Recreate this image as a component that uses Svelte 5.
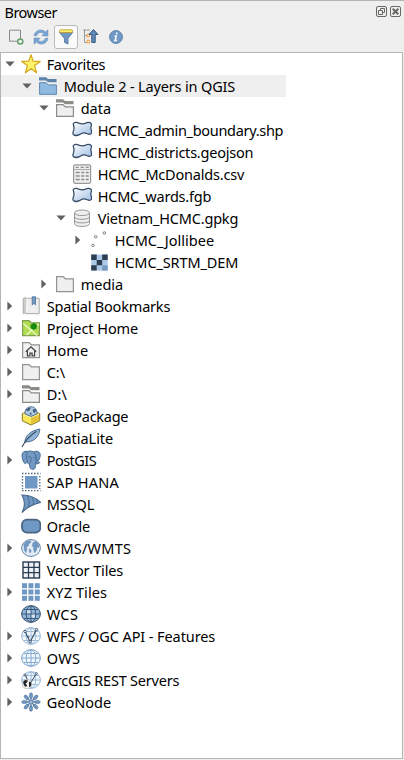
<script>
  const rows = [
    { label: 'Favorites', icon: 'star', level: 0, arrow: 'open', width: 58 },
    { label: 'Module 2 - Layers in QGIS', icon: 'blueFolder', level: 1, arrow: 'open', width: 171, selected: true },
    { label: 'data', icon: 'openFolder', level: 2, arrow: 'open', width: 30 },
    { label: 'HCMC_admin_boundary.shp', icon: 'polygon', level: 3, width: 185 },
    { label: 'HCMC_districts.geojson', icon: 'polygon', level: 3, width: 155 },
    { label: 'HCMC_McDonalds.csv', icon: 'table', level: 3, width: 146 },
    { label: 'HCMC_wards.fgb', icon: 'polygon', level: 3, width: 113 },
    { label: 'Vietnam_HCMC.gpkg', icon: 'database', level: 3, arrow: 'open', width: 140 },
    { label: 'HCMC_Jollibee', icon: 'points', level: 4, arrow: 'closed', width: 99 },
    { label: 'HCMC_SRTM_DEM', icon: 'raster', level: 4, width: 123 },
    { label: 'media', icon: 'folder', level: 2, arrow: 'closed', width: 42 },
    { label: 'Spatial Bookmarks', icon: 'bookmark', level: 0, arrow: 'closed', width: 123 },
    { label: 'Project Home', icon: 'project', level: 0, arrow: 'closed', width: 91 },
    { label: 'Home', icon: 'home', level: 0, arrow: 'closed', width: 41 },
    { label: 'C:\\', icon: 'folder', level: 0, arrow: 'closed', width: 18 },
    { label: 'D:\\', icon: 'openFolder', level: 0, arrow: 'closed', width: 20 },
    { label: 'GeoPackage', icon: 'package', level: 0, width: 81 },
    { label: 'SpatiaLite', icon: 'feather', level: 0, width: 66 },
    { label: 'PostGIS', icon: 'elephant', level: 0, arrow: 'closed', width: 49 },
    { label: 'SAP HANA', icon: 'hana', level: 0, width: 72 },
    { label: 'MSSQL', icon: 'mssql', level: 0, width: 47 },
    { label: 'Oracle', icon: 'oracle', level: 0, width: 43 },
    { label: 'WMS/WMTS', icon: 'wms', level: 0, arrow: 'closed', width: 84 },
    { label: 'Vector Tiles', icon: 'vectorTiles', level: 0, width: 76 },
    { label: 'XYZ Tiles', icon: 'xyz', level: 0, arrow: 'closed', width: 60 },
    { label: 'WCS', icon: 'wcs', level: 0, width: 31 },
    { label: 'WFS / OGC API - Features', icon: 'wfs', level: 0, arrow: 'closed', width: 168 },
    { label: 'OWS', icon: 'ows', level: 0, arrow: 'closed', width: 33 },
    { label: 'ArcGIS REST Servers', icon: 'arcgis', level: 0, arrow: 'closed', width: 132 },
    { label: 'GeoNode', icon: 'geonode', level: 0, arrow: 'closed', width: 64 }
  ];

  // Adjusts letter spacing so that a label fills its given width.
  function fit(node, width) {
    const natural = node.getBoundingClientRect().width;
    node.style.letterSpacing = `${(width + 0.5 - natural) / node.textContent.length}px`;
  }
  const cells = [0, 1, 2];
  const petals = [0, 45, 90, 135, 180, 225, 270, 315];
</script>

{#snippet globe(fill, line)}
  <ellipse cx="10" cy="10" rx="9.4" ry="8.3" fill={fill} stroke={line} />
  <path d="M10 2v16M1 10h18M3 5.5h14M3 14.5h14" fill="none" stroke={line} stroke-width=".9" />
  <ellipse cx="10" cy="10" rx="4.8" ry="8.2" fill="none" stroke={line} stroke-width=".9" />
{/snippet}

{#snippet icon(name)}
  <svg class="icon" viewBox="0 0 20 20" width="20" height="20">
    {#if name === 'star'}
      <path d="M10 .8l2.2 6.4 7 .2-5.6 4.2 2 7.2L10 14.7l-5.6 4.1 2-7.2L.8 7.4l7-.2z" fill="#fcf36b" stroke="#d5a51d" stroke-width="1.2" stroke-linejoin="round" />
    {:else if name === 'blueFolder'}
      <path d="M1 1.2h7l2 1.8h8.5v3.2H10L8 4.6H1z" fill="#5b83ac" />
      <path d="M1.6 6.7h6.5l2.3 2.2h8v9.4H1.6z" fill="#8fbbe2" stroke="#5b83ac" />
    {:else if name === 'openFolder'}
      <path d="M1 1.2h7l2 1.8h8.5v3.2H10L8 4.6H1z" fill="#8b8b87" />
      <path d="M1.6 6.7h6.5l2.3 2.2h8v9.4H1.6z" fill="#efefef" stroke="#8b8b87" stroke-width="1.2" />
    {:else if name === 'folder'}
      <path d="M1.6 2.6h6.5l2.3 2.2h8v12.9H1.6z" fill="#efefef" stroke="#939390" stroke-width="1.2" />
    {:else if name === 'polygon'}
      <defs><linearGradient id="area" x2="1" y2="1"><stop offset="0" stop-color="#fff" /><stop offset="1" stop-color="#9cbde3" /></linearGradient></defs>
      <path d="M1.2 4Q2.2 1.9 4.6 2.4c3.4 1.7 6.3 2.2 10 .3 2.6-.7 4.5-.2 4.8 1.3.3 1.6-.8 2.6-.5 4.3.3 2.1 1.2 3.6.4 5.1-.9 1.2-2.8 1-4.6.1-3.1-1.6-4.7-.4-6.8.9-2.6 1.3-5.1 1.4-6.5.1-.8-.9-.6-2.2.1-3.8 1-2.5.3-5-.3-6.7z" fill="url(#area)" stroke="#354b65" stroke-width="1.25" />
    {:else if name === 'table'}
      <rect x="1.6" y=".8" width="17" height="18.5" rx="1.5" fill="#eee" stroke="#999" stroke-width="1.2" />
      <path d="M2 5.5h16" stroke="#aaa" />
      <path d="M3.7 3.3h3M8.7 3.3h3M13.7 3.3h3M3.7 8.5h4M3.7 12h4M3.7 15.5h4M9.2 8.5h3M9.2 12h3M9.2 15.5h3M13.7 8.5h3M13.7 12h3M13.7 15.5h3" stroke="#8d8d8d" stroke-width="1.3" />
    {:else if name === 'database'}
      <path d="M2.5 5v10.5c0 4 15 4 15 0V5" fill="#efefef" stroke="#999" />
      <ellipse cx="10" cy="4.8" rx="7.5" ry="2.8" fill="#efefef" stroke="#999" />
      <path d="M2.5 8.7c0 3.5 15 3.5 15 0M2.5 12.3c0 3.5 15 3.5 15 0" fill="none" stroke="#999" />
    {:else if name === 'points'}
      <g fill="#eee" stroke="#8a8a86"><circle cx="4" cy="15.4" r="1.3" /><circle cx="6.7" cy="6.8" r="1.3" /><circle cx="15.4" cy="3" r="1.3" /></g>
    {:else if name === 'raster'}
      <g transform="translate(1.2 .6)">
        <path d="M1 2h16.5v16H1z" fill="#adc9e8" />
        <path d="M1 2h5.5v5.3H1zM12 2h5.5v5.3H12zM6.5 7.3H12v5.4H6.5zM1 12.7h5.5V18H1z" fill="#2c3e52" />
        <path d="M12 12.7h5.5V18H12z" fill="#7699c3" />
      </g>
    {:else if name === 'bookmark'}
      <path d="M2.2 2.5q2-1.6 4 0v15q-2-1.3-4 0z" fill="#ccc" stroke="#aaa" />
      <path d="M6.4 2.3h11.8v15.4H4.8" fill="#eee" stroke="#aaa" />
      <path d="M5.8 2.5v13.2" stroke="#fff" />
      <path d="M11.2.8h3.3v8l-1.6-1.4-1.7 1.4z" fill="#739bc6" stroke="#4d7097" stroke-width=".8" />
    {:else if name === 'project'}
      <path d="M1.6 2.6h6.5l2.3 2.2h8v12.9H1.6z" fill="#b0dc52" stroke="#829e55" stroke-width="1.2" />
      <path d="M2.2 5.5l14 12M5.5 17L17.8 6" stroke="#effbc8" stroke-width="1.2" />
      <path d="M9.5 7l3.5-2.2 3.2 2.4-.8 3.6-3.2 1.2-2.5-2z" fill="#168b10" />
    {:else if name === 'home'}
      <path d="M1.6 2.6h6.5l2.3 2.2h8v12.9H1.6z" fill="#efefef" stroke="#939390" stroke-width="1.2" />
      <path d="M4.8 11.8L10 6.8l5.2 5M6.4 11v4.8h2.5v-2.6h2.2v2.6h2.5V11" fill="none" stroke="#444" stroke-width="1.2" />
    {:else if name === 'package'}
      <path d="M1.3 7.5L10 5l8.7 2.5v7.3L10 19l-8.7-4.2z" fill="#fbe859" stroke="#8a7420" />
      <path d="M10 11v7.4l8.2-4V7.8z" fill="#e5c337" />
      <path d="M2 8l8 3.4L18 8" fill="none" stroke="#fff7b5" />
      <path d="M4.2 8C3.2 4 6.2.8 10 .8S16.8 4 15.8 8L10 10.4z" fill="#b3cbe4" stroke="#4a6b8d" />
      <path d="M5.6 3l2.6-1.4 1.6.9-1.2 1.8L7 5.4 5 4.3zM11.7 3.4l2.3-.6 1.2 2.3-1.9 2.2-1.3-1.3zM8.3 7.1l1.9-.5.5 1.4-1 1.2z" fill="#41617f" />
    {:else if name === 'feather'}
      <path d="M3.8 14.3C4.2 8.2 8.8 2.8 18.8 1c-.2 5-3.2 10.6-9 12.2-2.7.8-4.2.5-6 1.1z" fill="#91b5d8" stroke="#4e6e90" />
      <path d="M1 19C4 13 8 8 15.5 3.2" fill="none" stroke="#344c65" stroke-width="1.1" />
    {:else if name === 'elephant'}
      <path d="M6.2 1.5C2.8.5.8 3 1.1 6c.2 3.7 1.8 7.6 3.3 7.6 1 0 1.5-1.5 2.2-1.5.6 2 .9 2 1.9 2 .3 2.2 0 5.2 3.3 5.2 3.2 0 2.5-3.2 2.9-5.4 2-.1 3.5-.4 4.2-1.5-1-.2-2-.2-2.2-.8 1.8-2.4 3.1-5.3 2.3-8-.8-2.3-4-3-6.5-1.7-2.4-1.2-4.7-1-6.3-.4z" fill="#7499c3" stroke="#456b92" />
      <path d="M6.4 2C4.8 5 5.6 8.5 6.6 12M7 7c3-1.4 3.3.6 2.9 3.4-.2 1.7-.8 2.6-1.4 3.2M12.6 2c2.2 2.4 2.9 5.5 3.9 9.6M12.5 7.3c2.7-.7 3.1 2 1.8 6.5" fill="none" stroke="#456b92" stroke-width=".9" />
    {:else if name === 'hana'}
      <rect x="4" y="4" width="12.5" height="12.5" fill="#6f98c5" />
      <path d="M1 1.5h18.5M1 18.6h18.5M1.5 4v13M18.8 4v13" fill="none" stroke="#4e6680" stroke-width="1.3" stroke-dasharray="1.5 1.5" />
    {:else if name === 'mssql'}
      <path d="M1 1c7 0 14 2.7 18.6 7.4C13 10 6 13 1 18.5 4.5 12 4.5 7 1 1z" fill="#6f98c5" stroke="#4d6b8c" stroke-width="1.2" />
      <path d="M6.2 2c2.5 4 2.6 8 1 11.2M11 3.6c1.7 2.3 1.8 4.7 1 6.8M15.5 6c.8 1.2.8 2 .5 3" fill="none" stroke="#4d6b8c" />
    {:else if name === 'oracle'}
      <rect x="1" y="3.6" width="18.4" height="13" rx="5" fill="#6f98c5" stroke="#4a6481" stroke-width="1.8" />
    {:else if name === 'wms'}
      <ellipse cx="10" cy="10" rx="9.4" ry="8.4" fill="#e3edf7" stroke="#6485a8" />
      <path d="M2.5 6.5l3-3.2 4-.6.5 1.6-2 1.5-1 2.4-1.7.8.6 2.2-.9 3.6-2-3.1.4-2zM12 4.5l3.2-1.1 3 3.6-.5 2.6-1.7-.6-.5 3.4-1.9 2.4-1.1-3.4.3-2.3-1.7-.9zM8.2 11l2 1-.7 3-1.2-.8z" fill="#6f98c5" stroke="#6485a8" stroke-width=".4" />
    {:else if name === 'vectorTiles'}
      <rect x="2" y="2" width="16.5" height="16" fill="#eef2f8" stroke="#2b3b4e" stroke-width="1.4" />
      <path d="M7.5 2v16M13 2v16M2 7.3h16.5M2 12.7h16.5" stroke="#2b3b4e" stroke-width="1.3" />
    {:else if name === 'xyz'}
      {#each cells as y}{#each cells as x}<rect x={1 + x * 6.4} y={1.2 + y * 6.3} width="5" height="5" fill="#6f98c5" />{/each}{/each}
    {:else if name === 'wcs'}
      {@render globe('#8eb5dc', '#36506b')}
      <path d="M6 6.2h3.4v3.1H6zM10.6 10.6H14v3.1h-3.4z" fill="#fff" opacity=".6" />
    {:else if name === 'wfs'}
      {@render globe('#f3f8fc', '#94b6d8')}
      <path d="M4 5.5L9.2 16 15.5 3.5" fill="none" stroke="#344b63" stroke-width="1.1" />
      <g fill="#fff" stroke="#344b63" stroke-width=".9"><circle cx="4" cy="5.5" r="1.2" /><circle cx="9.2" cy="15.7" r="1.2" /><circle cx="15.5" cy="3.5" r="1.2" /><circle cx="7.2" cy="11" r=".8" /></g>
    {:else if name === 'ows'}
      {@render globe('#f0f6fb', '#7ba3cd')}
    {:else if name === 'arcgis'}
      {@render globe('#f3f8fc', '#94b6d8')}
      <path d="M4 5l5 9 6.3-10.5" fill="none" stroke="#344b63" />
      <g fill="#fff" stroke="#344b63" stroke-width=".8"><circle cx="4" cy="5" r="1" /><circle cx="15.3" cy="3.5" r="1" /></g>
      <circle cx="6" cy="14" r="4.8" fill="#f4f4f4" stroke="#999" stroke-width=".5" />
      <path d="M2 12l2-2 3 .5-1 2-1.5.8 1.5 2-1 2-2-2zM8 11.5l2.3 1L10 16l-2 1z" fill="#222" />
    {:else if name === 'geonode'}
      <path d="M10 4v12M4 10h12M6 6l8 8M14 6l-8 8" stroke="#5b80a9" stroke-width="1.4" />
      {#each petals as angle}
        <ellipse cx="10" cy="3.5" rx="1.6" ry="2.8" transform={`rotate(${angle} 10 10)`} fill="#7198c4" stroke="#4c6e93" stroke-width=".6" />
      {/each}
      <circle cx="10" cy="10" r="1.5" fill="#9dbbd9" />
    {/if}
  </svg>
{/snippet}

<main>
  <header>
    <span class="title" use:fit={52}>Browser</span>
    <div class="controls">
      <svg width="11" height="11" viewBox="0 0 11 11" fill="none" stroke="#696963"><rect x=".5" y=".5" width="10" height="10" rx="1.5" /><path d="M4.5 4V2.5h4v4H7M2.5 4.5h4v4h-4z" /></svg>
      <svg width="11" height="11" viewBox="0 0 11 11" fill="none" stroke="#696963"><rect x=".5" y=".5" width="10" height="10" rx="1.5" /><path d="M2.7 2.7l5.6 5.6M8.3 2.7L2.7 8.3" stroke-width="2" /></svg>
    </div>
  </header>

  <nav>
    <span class="tool"><svg width="20" height="20" viewBox="0 0 20 20"><path d="M3.5 3.2h11v11h-11z" fill="#efefef" stroke="#8b8b87" /><circle cx="14.3" cy="14.5" r="2.6" fill="#b9dfbb" stroke="#599761" stroke-width="1.2" /><path d="M14.3 13v3M12.8 14.5h3" stroke="#fff" /></svg></span>
    <span class="tool"><svg width="20" height="20" viewBox="0 0 20 20" fill="#7ba5d2" stroke="#6189b5" stroke-width=".5"><path d="M3 8.8C3.5 5 7 2.5 10.6 3c1.7.2 2.9.9 3.8 1.9L17 2.8v6.1h-6.2l2-2.1C10.2 4.6 7 5.5 5.7 8.8z" /><path d="M17 11.2c-.5 3.8-4 6.3-7.6 5.8-1.7-.2-2.9-.9-3.8-1.9L3 17.2v-6.1h6.2l-2 2.1c2.6 2.2 5.8 1.3 7.1-2z" /></svg></span>
    <span class="tool active"><svg width="20" height="20" viewBox="0 0 20 20"><path d="M3.5 5.5h13.2L12 11.5V17l-3.5-1.5v-4z" fill="#6f98c5" stroke="#4e7195" stroke-width=".8" /><rect x="3.5" y="2.8" width="13" height="2.8" rx="1" fill="#fbef6d" stroke="#b89625" stroke-width=".8" /></svg></span>
    <span class="tool"><svg width="20" height="20" viewBox="0 0 20 20"><path d="M3.5 3v12.5H6M3.5 8.5H6M2 3h7" fill="none" stroke="#9b9b97" /><path d="M6 7.2h2.6v2.6H6zM6 13.3h2.6v2.6H6z" fill="#fff" stroke="#f09a3e" /><path d="M12.5 2.5l4.5 5h-2.8v8h-3.4v-8H8z" fill="#5e8abb" stroke="#36597e" /></svg></span>
    <span class="tool"><svg width="20" height="20" viewBox="0 0 20 20"><circle cx="10" cy="10" r="6.4" fill="#7199c5" stroke="#5b80a9" /><path d="M10.7 5.5v1.8M8.5 9h1.8L9 13.7l2-.5" fill="none" stroke="#fff" stroke-width="1.5" /></svg></span>
  </nav>

  <section>
    {#each rows as row}
      <div class={['row', `level-${row.level}`, row.selected && 'selected']}>
        <span class="arrow">
          {#if row.arrow}
            <svg width="10" height="10" viewBox="0 0 10 10"><path d={row.arrow === 'open' ? 'M.4 2.5h9.2L5 7.6z' : 'M2.4.4v9.2L7.2 5z'} fill="#626262" /></svg>
          {/if}
        </span>
        {@render icon(row.icon)}
        <span class="label" use:fit={row.width}>{row.label}</span>
      </div>
    {/each}
  </section>
</main>

<style>
  :global(body) { background: #efefef; }
  main {
    box-sizing: border-box;
    width: 404px;
    height: 760px;
    display: flex;
    flex-direction: column;
    padding: 0 1px 1px 0;
    border-top: 1px solid #b5b5b5;
    background: #efefef;
    color: #000;
    font: 14.5px/22px "Noto Sans", "Open Sans", sans-serif;
    overflow: hidden;
    white-space: pre;
  }
  svg { display: block; flex: none; }
  header {
    box-sizing: border-box;
    flex: none;
    height: 22px;
    display: flex;
    justify-content: space-between;
    padding: 0 2px 0 4.5px;
  }
  .controls { display: flex; gap: 3px; padding-top: 5px; }
  nav { flex: none; height: 29px; display: flex; align-items: center; gap: 1px; padding: 0 0 1px 4px; box-sizing: border-box; }
  .tool {
    width: 24px;
    height: 24px;
    display: flex;
    align-items: center;
    justify-content: center;
  }
  .tool.active { box-sizing: border-box; background: #fbfbfb; border: 1px solid #b9b9b9; border-radius: 3px; }
  section {
    box-sizing: border-box;
    flex: none;
    height: 707px;
    border: 1px solid #b5b5b5;
    background: #fff;
  }
  .row { height: 22px; width: 285px; display: flex; align-items: center; box-sizing: border-box; padding-left: 3px; }
  .level-1 { padding-left: 20px; }
  .level-2 { padding-left: 37px; }
  .level-3 { padding-left: 54px; }
  .level-4 { padding-left: 71px; }
  .selected { background: #efefef; }
  .arrow { width: 17px; padding-left: 1px; box-sizing: border-box; flex: none; }
  .label { margin-left: 5.7px; }
</style>
